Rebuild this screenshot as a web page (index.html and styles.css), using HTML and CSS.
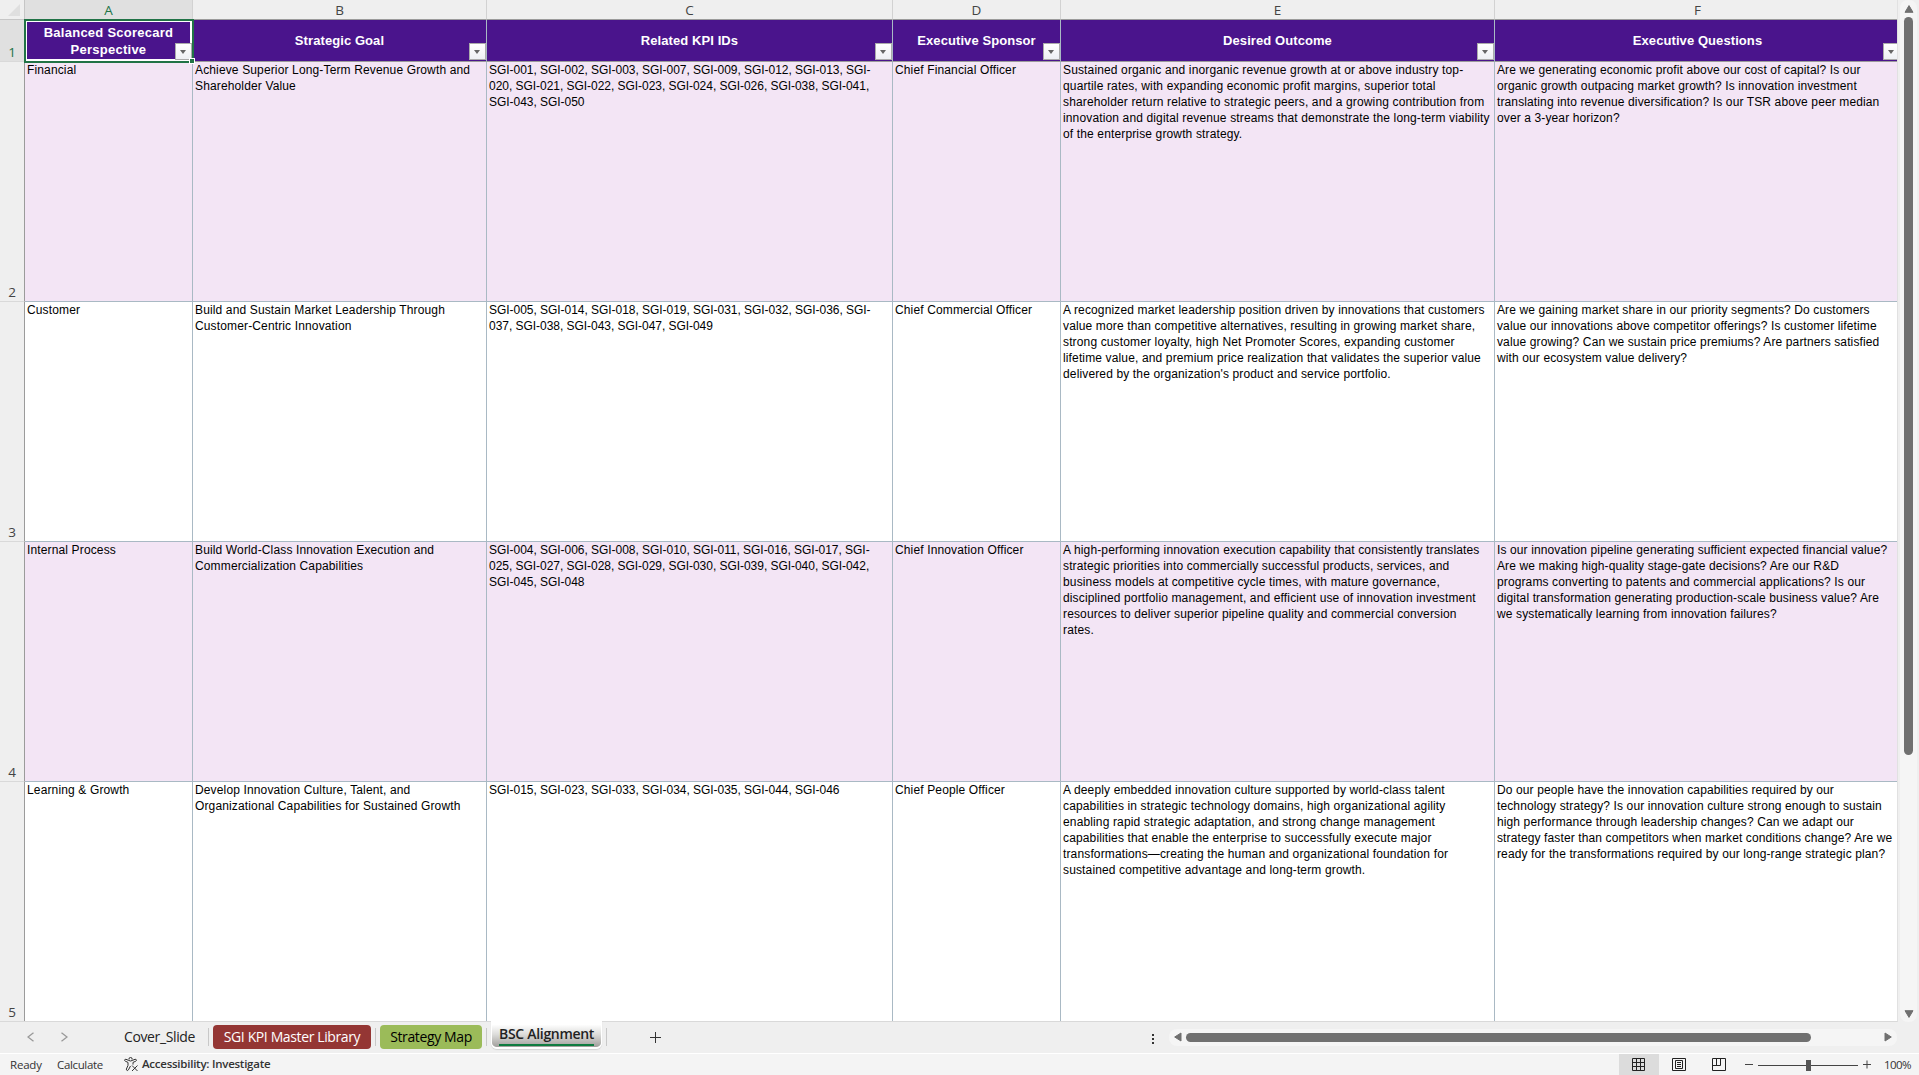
FILE: index.html
```
<!DOCTYPE html>
<html lang="en">
  <head>
    <meta charset="UTF-8" />
    <meta name="viewport" content="width=device-width, initial-scale=1.0" />
    <title>BSC Alignment</title>
    <link rel="stylesheet" href="styles.css">
  </head>
  <body>
    <div class="workbook">
      <div class="sheet-area">
        <div class="sheet">
          <div class="corner"><svg width="12" height="12" viewBox="0 0 12 12"><path d="M12 0v12H0z" fill="#dfdfdf" /></svg></div>
          <div class="col-head active">A</div>
          <div class="col-head">B</div>
          <div class="col-head">C</div>
          <div class="col-head">D</div>
          <div class="col-head">E</div>
          <div class="col-head">F</div>

          <div class="row-head active">1</div>
          <div class="title selected">Balanced Scorecard<br>Perspective<span class="filter"></span><span class="handle"></span></div>
          <div class="title">Strategic Goal<span class="filter"></span></div>
          <div class="title">Related KPI IDs<span class="filter"></span></div>
          <div class="title">Executive Sponsor<span class="filter"></span></div>
          <div class="title">Desired Outcome<span class="filter"></span></div>
          <div class="title">Executive Questions<span class="filter"></span></div>

          <div class="row-head">2</div>
          <div class="cell shaded">Financial</div>
          <div class="cell shaded goal">Achieve Superior Long-Term Revenue Growth and<br>Shareholder Value</div>
          <div class="cell shaded kpis">SGI-001, SGI-002, SGI-003, SGI-007, SGI-009, SGI-012, SGI-013, SGI-<br>020, SGI-021, SGI-022, SGI-023, SGI-024, SGI-026, SGI-038, SGI-041,<br>SGI-043, SGI-050</div>
          <div class="cell shaded sponsor">Chief Financial Officer</div>
          <div class="cell shaded outcome">Sustained organic and inorganic revenue growth at or above industry top-<br>quartile rates, with expanding economic profit margins, superior total<br>shareholder return relative to strategic peers, and a growing contribution from<br>innovation and digital revenue streams that demonstrate the long-term viability<br>of the enterprise growth strategy.</div>
          <div class="cell shaded questions">Are we generating economic profit above our cost of capital? Is our<br>organic growth outpacing market growth? Is innovation investment<br>translating into revenue diversification? Is our TSR above peer median<br>over a 3-year horizon?</div>

          <div class="row-head">3</div>
          <div class="cell">Customer</div>
          <div class="cell goal">Build and Sustain Market Leadership Through<br>Customer-Centric Innovation</div>
          <div class="cell kpis">SGI-005, SGI-014, SGI-018, SGI-019, SGI-031, SGI-032, SGI-036, SGI-<br>037, SGI-038, SGI-043, SGI-047, SGI-049</div>
          <div class="cell sponsor">Chief Commercial Officer</div>
          <div class="cell outcome">A recognized market leadership position driven by innovations that customers<br>value more than competitive alternatives, resulting in growing market share,<br>strong customer loyalty, high Net Promoter Scores, expanding customer<br>lifetime value, and premium price realization that validates the superior value<br>delivered by the organization's product and service portfolio.</div>
          <div class="cell questions">Are we gaining market share in our priority segments? Do customers<br>value our innovations above competitor offerings? Is customer lifetime<br>value growing? Can we sustain price premiums? Are partners satisfied<br>with our ecosystem value delivery?</div>

          <div class="row-head">4</div>
          <div class="cell shaded">Internal Process</div>
          <div class="cell shaded goal">Build World-Class Innovation Execution and<br>Commercialization Capabilities</div>
          <div class="cell shaded kpis">SGI-004, SGI-006, SGI-008, SGI-010, SGI-011, SGI-016, SGI-017, SGI-<br>025, SGI-027, SGI-028, SGI-029, SGI-030, SGI-039, SGI-040, SGI-042,<br>SGI-045, SGI-048</div>
          <div class="cell shaded sponsor">Chief Innovation Officer</div>
          <div class="cell shaded outcome">A high-performing innovation execution capability that consistently translates<br>strategic priorities into commercially successful products, services, and<br>business models at competitive cycle times, with mature governance,<br>disciplined portfolio management, and efficient use of innovation investment<br>resources to deliver superior pipeline quality and commercial conversion<br>rates.</div>
          <div class="cell shaded questions">Is our innovation pipeline generating sufficient expected financial value?<br>Are we making high-quality stage-gate decisions? Are our R&amp;D<br>programs converting to patents and commercial applications? Is our<br>digital transformation generating production-scale business value? Are<br>we systematically learning from innovation failures?</div>

          <div class="row-head">5</div>
          <div class="cell">Learning &amp; Growth</div>
          <div class="cell goal">Develop Innovation Culture, Talent, and<br>Organizational Capabilities for Sustained Growth</div>
          <div class="cell kpis">SGI-015, SGI-023, SGI-033, SGI-034, SGI-035, SGI-044, SGI-046</div>
          <div class="cell sponsor">Chief People Officer</div>
          <div class="cell outcome">A deeply embedded innovation culture supported by world-class talent<br>capabilities in strategic technology domains, high organizational agility<br>enabling rapid strategic adaptation, and strong change management<br>capabilities that enable the enterprise to successfully execute major<br>transformations—creating the human and organizational foundation for<br>sustained competitive advantage and long-term growth.</div>
          <div class="cell questions">Do our people have the innovation capabilities required by our<br>technology strategy? Is our innovation culture strong enough to sustain<br>high performance through leadership changes? Can we adapt our<br>strategy faster than competitors when market conditions change? Are we<br>ready for the transformations required by our long-range strategic plan?</div>
        </div>
        <div class="v-scroll">
          <svg width="10" height="8" viewBox="0 0 10 8"><path d="M5 0.6L9 7.3H1z" fill="#707070" stroke="#707070" stroke-linejoin="round" /></svg>
          <div class="v-thumb"></div>
          <svg width="10" height="8" viewBox="0 0 10 8"><path d="M5 7.4L9 0.7H1z" fill="#707070" stroke="#707070" stroke-linejoin="round" /></svg>
        </div>
      </div>

      <div class="tab-bar">
        <div class="tab-nav">
          <svg width="8" height="10" viewBox="0 0 8 10"><path d="M6.5 0.7L1 5l5.5 4.3" /></svg>
          <svg width="8" height="10" viewBox="0 0 8 10"><path d="M1.5 0.7L7 5l-5.5 4.3" /></svg>
        </div>
        <div class="tab cover">Cover_Slide</div>
        <div class="divider"></div>
        <div class="tab red">SGI KPI Master Library</div>
        <div class="divider"></div>
        <div class="tab green">Strategy Map</div>
        <div class="divider"></div>
        <div class="tab current"><span>BSC Alignment</span></div>
        <div class="divider"></div>
        <svg class="add" width="11" height="11" viewBox="0 0 11 11"><path d="M5.5 0v11M0 5.5h11" stroke="#333" /></svg>
        <div class="dots"><i></i><i></i><i></i></div>
        <div class="h-scroll">
          <svg width="8" height="10" viewBox="0 0 8 10"><path d="M0.7 5L7 1v8z" fill="#707070" stroke="#707070" stroke-linejoin="round" /></svg>
          <div class="h-thumb"></div>
          <svg width="8" height="10" viewBox="0 0 8 10"><path d="M7.3 5L1 1v8z" fill="#707070" stroke="#707070" stroke-linejoin="round" /></svg>
        </div>
      </div>

      <div class="status-bar">
        <span class="ready">Ready</span>
        <span class="calculate">Calculate</span>
        <svg class="person" width="15" height="15" viewBox="0 0 15 15"><path d="M5 2.5a1.600 1.600 0 1 1 3.100 0M4.900 3.500L2 2.300C0.600 1.900 0 3.600 1.300 4.200L4 5.400v3L2.400 12c-.4 1.500 1.300 2.100 2 .9L6.500 9M8.100 3.500L11 2.300c1.500-.4 2 1.300.8 1.900L9 5.400v2.200M5 3.500q1.500 1 3.100 0M8 8.500l5.500 5.500M13.500 8.500L8 14" /></svg>
        <span class="access">Accessibility: Investigate</span>
        <div class="views">
          <div class="view on"><svg width="14" height="14" viewBox="0 0 14 14"><path d="M0.5 0.5h12v12h-12zM4.500 0v13M8.500 0v13M0 4.500h13M0 8.500h13" /></svg></div>
          <div class="view"><svg width="14" height="14" viewBox="0 0 14 14"><path d="M0.5 0.5h13v12h-13zM3.500 2.500h7v8h-7zM5 4.500h4M5 6.500h4M5 8.500h4" /></svg></div>
          <div class="view"><svg width="14" height="14" viewBox="0 0 14 14"><path d="M0.5 0.5h13v12h-13zM4.500 0v7M8.500 0v7.500M0.500 7.500h8" /></svg></div>
        </div>
        <svg class="zoom-bar" width="128" height="14" viewBox="0 0 128 14"><path d="M1 6.500h8M14 7.500h100M119 6.500h8M123 2.500v8" stroke="#444" /><path d="M62 2h5v11h-5z" fill="#555" /></svg>
        <span class="percent">100%</span>
      </div>
    </div>
  </body>
</html>
```
FILE: styles.css
```
* {
  margin: 0;
  padding: 0;
  box-sizing: border-box;
}
body {
  width: 1919px;
  height: 1075px;
  overflow: hidden;
  background-color: #efefef;
  font-family: "Open Sans", "Noto Sans", sans-serif;
}
svg {
  display: block;
  flex: none;
}

/* grid */
.sheet-area {
  display: flex;
  height: 1022px;
}
.sheet {
  width: 1898px;
  overflow: hidden;
  flex: none;
  display: grid;
  grid-template-columns: 25px 168px 294px 406px 168px 434px 406px;
  grid-template-rows: 20px 42px repeat(4, 240px);
  border-bottom: 1px solid #d9d9d9;
  border-right: 1px solid #e1e1e1;
}
.corner {
  display: flex;
  justify-content: flex-end;
  padding: 4px 4px 0 0;
  border-right: 1px solid #c6c6c6;
  border-bottom: 1px solid #c6c6c6;
}
.col-head {
  border-right: 1px solid #d2d2d2;
  border-bottom: 1px solid #9b9b9b;
  color: #444;
  font-size: 13.5px;
  line-height: 21px;
  text-align: center;
}
.row-head {
  display: flex;
  align-items: flex-end;
  justify-content: center;
  padding-bottom: 1px;
  border-right: 1px solid #9b9b9b;
  border-bottom: 1px solid #d9d9d9;
  color: #444;
  font-size: 13.5px;
  line-height: 16px;
}
.active {
  background-color: #e0e0e0;
  color: #217346;
}
.title {
  position: relative;
  display: flex;
  align-items: center;
  justify-content: center;
  border-right: 1px solid #a9b9c4;
  border-bottom: 1px solid #9b9b9b;
  background-color: #4a148c;
  color: #fff;
  font-family: "Liberation Sans", Arial, sans-serif;
  font-size: 13px;
  font-weight: bold;
  line-height: 17px;
  letter-spacing: 0.08px;
  text-align: center;
}
.selected {
  box-shadow: inset 0 0 0 2px #fff;
  outline: 2px solid #217346;
  outline-offset: -1px;
  letter-spacing: 0.25px;
  z-index: 1;
}
.filter {
  position: absolute;
  right: 0;
  bottom: 1px;
  width: 17px;
  height: 17px;
  border: 1px solid #ababab;
  background: linear-gradient(#fff, #eef0f4);
}
.filter::after {
  content: "";
  position: absolute;
  left: 4px;
  top: 6px;
  border: 3.5px solid transparent;
  border-top: 4px solid #666;
  border-bottom: 0;
}
.handle {
  position: absolute;
  right: -3px;
  bottom: -3px;
  width: 6px;
  height: 6px;
  border: 1px solid #fff;
  background-color: #217346;
}
.cell {
  padding: 0 2px;
  border-right: 1px solid #a9b9c4;
  border-bottom: 1px solid #a9b9c4;
  background-color: #fff;
  color: #000;
  font-family: "Liberation Sans", Arial, sans-serif;
  font-size: 12px;
  line-height: 16px;
  letter-spacing: 0.14px;
  white-space: nowrap;
}
.kpis {
  letter-spacing: -0.04px;
}
.questions {
  letter-spacing: 0.12px;
}
.shaded {
  background-color: #f3e5f5;
}

/* scroll bars */
.v-scroll {
  width: 17px;
  margin-left: 2px;
  padding: 5px 0 4px;
  display: flex;
  flex-direction: column;
  align-items: center;
  border-radius: 8px;
  background-color: #f5f5f5;
}
.v-thumb {
  width: 9px;
  height: 738px;
  margin: 4px 0 auto;
  border-radius: 5px;
  background-color: #707070;
}
.h-scroll {
  width: 728px;
  height: 17px;
  display: flex;
  align-items: center;
  margin-right: 22px;
  padding: 0 5px;
  border-radius: 8px;
  background-color: #f5f5f5;
}
.h-thumb {
  width: 625px;
  height: 9px;
  margin: 0 auto 0 4px;
  border-radius: 5px;
  background-color: #707070;
}

/* sheet tabs */
.tab-bar {
  height: 31px;
  display: flex;
  align-items: center;
  padding-bottom: 1px;
  font-size: 14px;
  letter-spacing: -0.38px;
}
.tab-nav {
  width: 115px;
  display: flex;
  gap: 25px;
  padding-left: 27px;
}
.tab-nav path {
  fill: none;
  stroke: #999;
  stroke-width: 1.3;
}
.tab {
  height: 24px;
  line-height: 24px;
  border-radius: 4px;
  text-align: center;
  white-space: nowrap;
  color: #222;
}
.cover {
  width: 89px;
}
.divider {
  width: 1px;
  height: 18px;
  margin: 0 4px;
  background-color: #c8c8c8;
}
.red {
  width: 158px;
  background-color: #943634;
  color: #fff;
}
.green {
  width: 102px;
  background-color: #9bbb59;
  color: #000;
}
.current {
  width: 111px;
  height: 28px;
  margin-top: -4px;
  padding: 0 7px;
  border: 1px solid #fff;
  border-bottom-width: 2px;
  border-radius: 0 0 6px 6px;
  box-shadow: 0 1px 1px #d4d4d4;
  background: linear-gradient(#fff 10%, #dcdcda 50%, #a19f9c);
  font-weight: 600;
  letter-spacing: -0.3px;
}
.current span {
  display: block;
  height: 24px;
  border-bottom: 2px solid #107c41;
}
.add {
  margin-left: 39px;
}
.dots {
  display: flex;
  flex-direction: column;
  gap: 2px;
  margin-top: 3px;
  margin-left: auto;
  margin-right: 15px;
}
.dots i {
  width: 2px;
  height: 2px;
  background-color: #333;
}

/* status bar */
.status-bar {
  height: 22px;
  display: flex;
  align-items: center;
  border-top: 1px solid #fff;
  background-color: #f4f4f4;
  font-size: 11.5px;
  letter-spacing: -0.2px;
  color: #333;
}
.ready {
  width: 47px;
  margin-left: 10px;
}
.calculate {
  width: 67px;
  letter-spacing: -0.35px;
}
.person {
  margin-top: -1px;
  fill: none;
  stroke: #333;
}
.access {
  margin: -2px 0 0 3px;
  font-weight: 600;
  letter-spacing: -0.25px;
}
.views {
  display: flex;
  margin-left: auto;
}
.view {
  width: 40px;
  height: 21px;
  display: flex;
  align-items: center;
  justify-content: center;
}
.view.on {
  background-color: #dcdcdc;
}
.view path {
  fill: none;
  stroke: #222;
}
.zoom-bar {
  margin-left: 5px;
}
.percent {
  width: 35px;
  margin-left: 12px;
  letter-spacing: -0.6px;
}
```
